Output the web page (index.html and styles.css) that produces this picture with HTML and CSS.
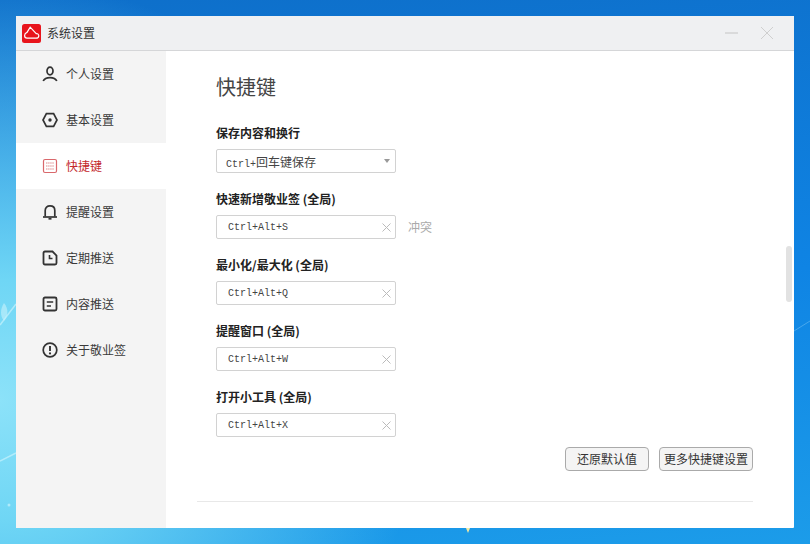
FILE: index.html
```html
<!DOCTYPE html>
<html lang="zh-CN">
<head>
    <meta charset="UTF-8">
    <title>系统设置</title>
    <link rel="stylesheet" href="styles.css">
</head>
<body>
    <svg class="wallpaper" width="810" height="544" viewBox="0 0 810 544">
        <path d="M0 325 L16 304" stroke="#c8f2fc" stroke-width="1.5" opacity="0.7" fill="none"/>
        <path d="M0 461 L16 453" stroke="#c8f2fc" stroke-width="1.5" opacity="0.7" fill="none"/>
        <path d="M4 303 C0 309 0 316 4 321 C8 316 9 309 4 303 Z" fill="#c8f2fc" opacity="0.6"/>
        <circle cx="9" cy="505" r="1.5" fill="#c8f2fc" opacity="0.7"/>
        <path d="M794 331 L810 321" stroke="#5eb4f0" stroke-width="1" opacity="0.7" fill="none"/>
        <path d="M466 528 H470 L468 533 Z" fill="#f2e9a0"/>
    </svg>

    <div class="window">
        <div class="titlebar">
            <svg class="logo" width="19" height="19" viewBox="0 0 19 19">
                <rect width="19" height="19" rx="2.5" fill="#e8141c"/>
                <path d="M5 14.2 H14 C15.8 14.2 16.8 13 16.8 11.7 C16.8 10.4 15.7 9.4 14.2 9.6 L8.2 3.2 L5 8.4 C3.4 9 2.6 10.2 2.6 11.6 C2.6 13.2 3.6 14.2 5 14.2 Z" fill="none" stroke="#fff" stroke-width="1.2"/>
            </svg>
            <span class="titlebar-text">系统设置</span>
            <div class="window-buttons">
                <svg width="14" height="14" viewBox="0 0 14 14"><path d="M0 7 H13" stroke="#c4c4c4" stroke-width="1"/></svg>
                <svg width="14" height="14" viewBox="0 0 14 14"><path d="M1 1 L13 13 M13 1 L1 13" stroke="#cfcfcf" stroke-width="1"/></svg>
            </div>
        </div>

        <div class="content">
            <div class="sidebar">
                <div class="nav-item">
                    <svg width="16" height="16" viewBox="0 0 16 16" fill="none" stroke="#333" stroke-width="1.7">
                        <ellipse cx="8" cy="5" rx="3" ry="3.8"/>
                        <path d="M1.2 15 C2.4 12.4 5 11.6 8 11.6 C11 11.6 13.6 12.4 14.8 15"/>
                    </svg>
                    <span>个人设置</span>
                </div>
                <div class="nav-item">
                    <svg width="16" height="16" viewBox="0 0 16 16" fill="none" stroke="#333" stroke-width="1.7">
                        <path d="M4.4 1.6 H11.6 L15 8 L11.6 14.4 H4.4 L1 8 Z"/>
                        <circle cx="8" cy="8" r="1.7" fill="#333" stroke="none"/>
                    </svg>
                    <span>基本设置</span>
                </div>
                <div class="nav-item active">
                    <svg width="16" height="16" viewBox="0 0 16 16" fill="none">
                        <rect x="1.5" y="1.5" width="13" height="13" rx="1.5" stroke="#d9686c" stroke-width="1.2"/>
                        <path d="M4 5 H12 M4 8 H12 M4 11 H12" stroke="#e08a8d" stroke-width="1.2" stroke-dasharray="1.5 0.6"/>
                    </svg>
                    <span>快捷键</span>
                </div>
                <div class="nav-item">
                    <svg width="16" height="16" viewBox="0 0 16 16" fill="none" stroke="#333" stroke-width="1.7">
                        <path d="M3.2 12.6 V6.4 C3.2 3.6 5.2 1.8 8 1.8 C10.8 1.8 12.8 3.6 12.8 6.4 V12.6"/>
                        <path d="M1 13 H15"/>
                        <path d="M6.5 14.8 H9.5"/>
                    </svg>
                    <span>提醒设置</span>
                </div>
                <div class="nav-item">
                    <svg width="16" height="16" viewBox="0 0 16 16" fill="none" stroke="#333" stroke-width="1.8">
                        <path d="M3 1.5 H10.5 L14.5 5.5 V13 C14.5 14 14 14.5 13 14.5 H3 C2 14.5 1.5 14 1.5 13 V3 C1.5 2 2 1.5 3 1.5 Z"/>
                        <path d="M7.5 5 V8.5 H10.5" stroke-width="1.6"/>
                    </svg>
                    <span>定期推送</span>
                </div>
                <div class="nav-item">
                    <svg width="16" height="16" viewBox="0 0 16 16" fill="none" stroke="#333" stroke-width="1.8">
                        <rect x="1.5" y="1.5" width="13" height="13" rx="1.5"/>
                        <path d="M4.8 6 H11.2 M4.8 10 H9" stroke-width="1.6"/>
                    </svg>
                    <span>内容推送</span>
                </div>
                <div class="nav-item">
                    <svg width="16" height="16" viewBox="0 0 16 16" fill="none" stroke="#333" stroke-width="1.7">
                        <circle cx="8" cy="8" r="6.8"/>
                        <path d="M8 4 V9" stroke-width="1.9"/>
                        <circle cx="8" cy="11.4" r="1.1" fill="#333" stroke="none"/>
                    </svg>
                    <span>关于敬业签</span>
                </div>
            </div>

            <div class="main">
                <div class="page-title">快捷键</div>

                <div class="fields">
                    <div class="field">
                        <label>保存内容和换行</label>
                        <div class="control select">
                            <span class="key-text">Ctrl+<span class="cn">回车键保存</span></span>
                            <span class="caret"></span>
                        </div>
                    </div>
                    <div class="field">
                        <label>快速新增敬业签 (全局)</label>
                        <div class="field-row">
                            <div class="control">
                                <span class="key-text">Ctrl+Alt+S</span>
                                <svg class="clear" width="9" height="9" viewBox="0 0 9 9"><path d="M0.5 0.5 L8.5 8.5 M8.5 0.5 L0.5 8.5" stroke="#bbb"/></svg>
                            </div>
                            <span class="conflict">冲突</span>
                        </div>
                    </div>
                    <div class="field">
                        <label>最小化/最大化 (全局)</label>
                        <div class="control">
                            <span class="key-text">Ctrl+Alt+Q</span>
                            <svg class="clear" width="9" height="9" viewBox="0 0 9 9"><path d="M0.5 0.5 L8.5 8.5 M8.5 0.5 L0.5 8.5" stroke="#bbb"/></svg>
                        </div>
                    </div>
                    <div class="field">
                        <label>提醒窗口 (全局)</label>
                        <div class="control">
                            <span class="key-text">Ctrl+Alt+W</span>
                            <svg class="clear" width="9" height="9" viewBox="0 0 9 9"><path d="M0.5 0.5 L8.5 8.5 M8.5 0.5 L0.5 8.5" stroke="#bbb"/></svg>
                        </div>
                    </div>
                    <div class="field">
                        <label>打开小工具 (全局)</label>
                        <div class="control">
                            <span class="key-text">Ctrl+Alt+X</span>
                            <svg class="clear" width="9" height="9" viewBox="0 0 9 9"><path d="M0.5 0.5 L8.5 8.5 M8.5 0.5 L0.5 8.5" stroke="#bbb"/></svg>
                        </div>
                    </div>
                </div>

                <div class="actions">
                    <button class="btn btn-reset">还原默认值</button>
                    <button class="btn btn-more">更多快捷键设置</button>
                </div>
                <div class="divider"></div>
                <div class="scrollbar"></div>
            </div>
        </div>
    </div>
</body>
</html>
```

FILE: styles.css
```css
* {
    box-sizing: border-box;
}
html, body {
    height: 100%;
}
body {
    margin: 0;
    width: 810px;
    height: 544px;
    padding: 16px;
    overflow: hidden;
    position: relative;
    font-family: "Noto Sans CJK SC", "Liberation Sans", sans-serif;
    font-size: 12px;
    color: #333;
    background:
        radial-gradient(circle at 0 400px, #8ce2f9 0, #6fd6f5 120px, rgba(60, 170, 235, 0) 420px),
        linear-gradient(175deg, #0e6fca 0, #0f84e4 55%, #1c9ce9 100%);
}
.wallpaper {
    position: absolute;
    left: 0;
    top: 0;
}
.window {
    position: relative;
    width: 778px;
    height: 512px;
    display: flex;
    flex-direction: column;
    background-color: #fff;
    border-radius: 1px;
}
.titlebar {
    height: 35px;
    flex-shrink: 0;
    display: flex;
    align-items: center;
    padding-left: 6px;
    background-color: #eff0f2;
    border-bottom: 1px solid #d5d6d8;
}
.logo {
    margin-right: 6px;
}
.titlebar-text {
    line-height: 16px;
    margin-bottom: 1px;
}
.window-buttons {
    margin-left: auto;
    display: flex;
    gap: 21px;
    padding-right: 20px;
}
.content {
    flex: 1;
    display: flex;
    min-height: 0;
}
.sidebar {
    width: 150px;
    flex-shrink: 0;
    background-color: #f4f4f4;
}
.nav-item {
    height: 46px;
    display: flex;
    align-items: center;
    gap: 8px;
    padding-left: 26px;
    color: #3a3a3a;
}
.nav-item span {
    margin-bottom: 2px;
}
.nav-item.active {
    background-color: #fff;
    color: #c3272b;
}
.main {
    flex: 1;
    position: relative;
    padding: 21px 41px 0 50px;
}
.page-title {
    font-size: 20px;
    line-height: 30px;
    color: #444;
    margin-bottom: 23px;
}
.fields {
    display: flex;
    flex-direction: column;
    gap: 18px;
}
.field label {
    display: block;
    font-weight: bold;
    line-height: 16px;
    margin-bottom: 8px;
    color: #222;
}
.field-row {
    display: flex;
    align-items: center;
    gap: 12px;
}
.control {
    width: 180px;
    height: 24px;
    display: flex;
    align-items: center;
    justify-content: space-between;
    padding: 0 4px 0 11px;
    background-color: #fff;
    border: 1px solid #d2d2d2;
    border-radius: 2px;
}
.control.select {
    padding: 0 5px 0 9px;
}
.key-text {
    font-family: "Liberation Mono", "Noto Sans CJK SC", monospace;
    font-size: 10px;
    color: #444;
}
.key-text .cn {
    font-family: "Noto Sans CJK SC", sans-serif;
    font-size: 12px;
}
.caret {
    width: 0;
    height: 0;
    border-left: 3.5px solid transparent;
    border-right: 3.5px solid transparent;
    border-top: 4px solid #999;
}
.conflict {
    color: #aaa;
    margin-bottom: 2px;
}
.actions {
    display: flex;
    justify-content: flex-end;
    gap: 10px;
    margin-top: 10px;
}
.btn {
    height: 24px;
    padding: 0 0 2px;
    font-family: inherit;
    font-size: 12px;
    color: #333;
    background-color: #f4f4f4;
    border: 1px solid #aaa;
    border-radius: 4px;
}
.btn-reset {
    width: 84px;
}
.btn-more {
    width: 94px;
}
.divider {
    height: 1px;
    margin: 30px 0 0 -19px;
    background-color: #e8e8e8;
}
.scrollbar {
    position: absolute;
    top: 195px;
    right: 2px;
    width: 6px;
    height: 56px;
    border-radius: 3px;
    background-color: #e2e2e2;
}
```
